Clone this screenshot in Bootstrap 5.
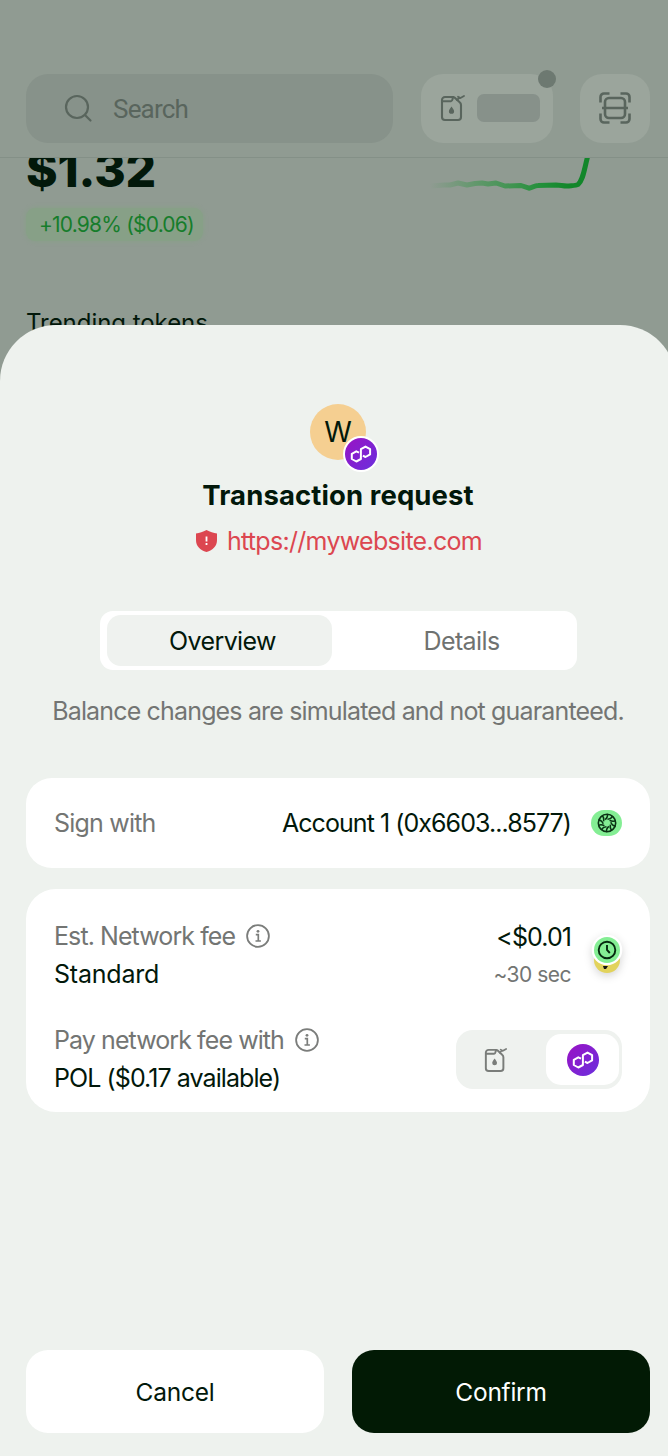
<!DOCTYPE html>
<html lang="en">
<head>
<meta charset="utf-8">
<meta name="viewport" content="width=device-width, initial-scale=1">
<title>Transaction request</title>
<link href="https://cdn.jsdelivr.net/npm/bootstrap@5.3.0/dist/css/bootstrap.min.css" rel="stylesheet">
<style>
  body{font-family:Inter,"Liberation Sans",sans-serif;background:#909b92;color:#02180a;height:1456px;overflow:hidden;font-size:25px;line-height:38px}
  span{white-space:nowrap}
  svg{display:block;flex:none}
  .topbar{height:158px;padding:73.500px 18px 0 26px;border-bottom:1px solid #849087}
  .search-box{width:367px;height:69px;border-radius:22px;background:#87928a;color:#59655d;padding-left:38px;font-family:Roboto,sans-serif;font-size:26px;letter-spacing:-.8px;gap:20px}
  .search-box span{padding-top:2px}
  .tile{height:69px;border-radius:22px;background:#9ba59c;color:#59655d}
  .tile-gas{width:132px;margin-left:28px;padding-left:19px;gap:11px}
  .tile-scan{width:70px;margin-left:27px}
  .skeleton{width:63px;height:28px;border-radius:7px;background:#87918a}
  .dot{width:18px;height:18px;background:#6d7971;right:-3px;top:-4px}
  .behind{height:200px;padding:0 26px;overflow:hidden}
  .price{font-size:48px;font-weight:800;letter-spacing:-.2px;line-height:50px;margin-top:-13px;height:51px}
  .change{height:33px;line-height:33px;margin-top:12px;padding:0 13px;border-radius:9px;background:#87a087;color:#167d2b;font-size:21px;letter-spacing:-.8px;width:177px;box-shadow:0 0 5px #87a087}
  .spark{margin-right:50px}
  .trend{margin-top:63px;font-size:24px;letter-spacing:-.05px}
  .sheet{left:0;right:-8px;top:325px;height:1131px;border-radius:56px 56px 0 0;background:#eef2ee;padding:79px 26px 0 26px}
  .avatar{width:56px;height:56px;background:#f5cf91;font-size:28px;line-height:56px}
  .chain{left:33px;top:32px}
  .title{font-size:27.500px;font-weight:700;line-height:38px;letter-spacing:.1px;margin-top:16px}
  .url{color:#dc4750;margin-top:8px;gap:10px;letter-spacing:-.7px;padding-left:2px}
  .tabs{width:477px;height:59px;border-radius:13px;background:#fff;padding:4px 7px;margin-top:51px;letter-spacing:-.6px}
  .tab-on{width:225px;background:#eff2ef;border-radius:14px;line-height:52px;padding-left:7px}
  .tab-off{color:#6f7270;line-height:52px;padding-left:22px}
  .muted{color:#737573}
  .note{margin-top:22px;letter-spacing:-.84px}
  .panel{background:#fff;border-radius:26px;padding:0 28px}
  .p1{height:90px;margin-top:48px}
  .p2{height:223px;margin-top:21px;padding-top:28px;border-radius:30px}
  .tight{letter-spacing:-.92px}
  .std{letter-spacing:-.2px}
  .acct{letter-spacing:-.94px;margin-right:20px}
  .acct-icon{width:31px;height:26px;border-radius:13px;background:#84ee94}
  .info{margin-left:11px}
  .right-text{padding-top:1px}
  .small-note{font-size:21px;letter-spacing:-.5px}
  .fee-icon{margin-left:16px;margin-right:-5px;margin-top:9px;filter:drop-shadow(0 3px 4px rgba(0,0,0,.16))}
  .pay{margin-top:27px}
  .switcher{width:166px;height:59px;border-radius:17px;background:#eff2ef;padding:4px 3px 4px 0;margin-top:9px;color:#7a7d7a}
  .switcher .on{width:73px;background:#fff;border-radius:15px}
  .switcher .off{padding-right:10px}
  .actions{left:26px;right:26px;bottom:23px;gap:28px}
  .act{height:83px;border-radius:22px;border:0;font-size:24.500px;letter-spacing:-.25px;background:#fff;color:#02180a}
  .act.ok{background:#021a05;color:#fff}
</style>
</head>
<body>
<svg width="0" height="0" class="position-absolute">
  <defs>
    <linearGradient id="pg" x1="0" y1="0" x2="1" y2="1"><stop offset="0" stop-color="#9a12c4"/><stop offset="1" stop-color="#6a30dd"/></linearGradient>
    <symbol id="gas" viewBox="0 0 26 28"><g fill="none" stroke="currentColor" stroke-width="2.100" stroke-linejoin="round" stroke-linecap="round"><path d="M13.500 3H5a3 3 0 0 0-3 3v17a3 3 0 0 0 3 3h13a3 3 0 0 0 3-3V11c0-1-.5-2-1.300-2.700L14.500 3.500"/><path d="M2.500 7.300h8.500c1.500 0 1.300-1.800 2-3.800"/><path d="M17 6l2.500-2.500M18 2.800l2 1.400 4-2.200" stroke-width="1.800"/></g><path d="M11.500 12.500c1.500 2.200 2.600 3.300 2.600 4.700a2.600 2.600 0 0 1-5.200 0c0-1.400 1.100-2.500 2.600-4.700z" fill="currentColor"/></symbol>
    <symbol id="pol" viewBox="0 0 32 32"><circle cx="16" cy="16" r="16" fill="url(#pg)"/><path d="M14 14.700L11.300 13.300l-4.500 2.500v5.200l4.500 2.500 4.600-2.500V11.200l4.600-2.600 4.600 2.600v5.200l-4.600 2.600-2.600-1.400" fill="none" stroke="#fff" stroke-width="2" stroke-linejoin="round"/></symbol>
    <symbol id="info" viewBox="0 0 24 24"><circle cx="12" cy="12" r="10.900" fill="none" stroke="#7b7d7b" stroke-width="1.800"/><circle cx="12" cy="7.300" r="1.400" fill="#7b7d7b"/><path d="M9.800 10.700h2.500v6M9.500 17h5.400" fill="none" stroke="#7b7d7b" stroke-width="1.700"/></symbol>
    <path id="blade" d="M.5-3.800C3-4 5.500-5.500 5.200-7.200"/>
  </defs>
</svg>
<header class="topbar d-flex">
  <div class="search-box d-flex align-items-center">
    <svg width="29" height="29" viewBox="0 0 29 29" fill="none" stroke="currentColor" stroke-width="2.200" stroke-linecap="round"><circle cx="13" cy="13" r="11"/><path d="M21 21l5.500 5.500"/></svg>
    <span>Search</span>
  </div>
  <div class="tile tile-gas d-flex align-items-center position-relative">
    <svg width="26" height="28"><use href="#gas"/></svg>
    <div class="skeleton"></div>
    <div class="dot rounded-circle position-absolute"></div>
  </div>
  <div class="tile tile-scan d-flex align-items-center justify-content-center">
    <svg width="32" height="32" viewBox="0 0 32 32" fill="none" stroke="currentColor" stroke-width="2.600"><path d="M1.500 10.500V5A3.500 3.500 0 0 1 5 1.500h5.500M21.500 1.500H27A3.500 3.500 0 0 1 30.500 5v5.500M30.500 21.500V27a3.500 3.500 0 0 1-3.500 3.500h-5.500M10.500 30.500H5A3.500 3.500 0 0 1 1.500 27v-5.500M3 16h26"/><rect x="6" y="6" width="20" height="20" rx="4"/></svg>
  </div>
</header>
<section class="behind">
  <div class="d-flex justify-content-between">
    <div class="price">$1.32</div>
    <svg class="spark" width="165" height="38" viewBox="427 158 165 38"><defs><linearGradient id="sg" gradientUnits="userSpaceOnUse" x1="430" x2="570" y1="0" y2="0"><stop offset="0" stop-color="#2d9440" stop-opacity="0"/><stop offset=".35" stop-color="#2d9440" stop-opacity=".5"/><stop offset=".8" stop-color="#22903a"/><stop offset="1" stop-color="#12862a"/></linearGradient></defs><path d="M430 186l14-1 6 0 8-2 9 2 8-1.500 7-.5 6 1 8-1 9 3 16-.5 8 2.700c4-.5 5-2.700 9-2.700l18-.5c5 0 6 1 11 1 5-.5 9-.2 11-1.500 5-4 6-14 9.500-27.500" fill="none" stroke="url(#sg)" stroke-width="5" stroke-linejoin="round"/></svg>
  </div>
  <div class="change"><span>+10.98% ($0.06)</span></div>
  <div class="trend">Trending tokens</div>
</section>
<main class="sheet position-absolute d-flex flex-column align-items-center">
  <div class="avatar rounded-circle position-relative text-center">W
    <svg class="chain position-absolute" width="36" height="36" viewBox="-2 -2 36 36"><circle cx="16" cy="16" r="18" fill="#fff"/><use href="#pol" width="32" height="32"/></svg>
  </div>
  <h1 class="title mb-0">Transaction request</h1>
  <div class="url d-flex align-items-center">
    <svg width="21" height="22" viewBox="0 0 21 22"><path d="M10.500 0c3.500 2 7 3 10.500 3.500v6.500c0 6-4 10-10.500 12C4 20 0 16 0 10V3.500C3.500 3 7 2 10.500 0z" fill="#dc4750"/><path d="M10.500 6.500v5M10.500 13v2" stroke="#fff" stroke-width="1.800"/></svg>
    <span>https://mywebsite.com</span>
  </div>
  <div class="tabs d-flex text-center">
    <div class="tab-on">Overview</div>
    <div class="tab-off flex-fill">Details</div>
  </div>
  <div class="note muted"><span>Balance changes are simulated and not guaranteed.</span></div>
  <section class="panel p1 w-100 d-flex align-items-center">
    <span class="muted me-auto" style="letter-spacing:-.8px">Sign with</span>
    <span class="acct">Account 1 (0x6603...8577)</span>
    <div class="acct-icon d-flex align-items-center justify-content-center">
      <svg width="20" height="20" viewBox="-10 -10 20 20" fill="none" stroke="#0a3314" stroke-width="1.600"><circle r="8.700"/><use href="#blade"/><use href="#blade" transform="rotate(36)"/><use href="#blade" transform="rotate(72)"/><use href="#blade" transform="rotate(108)"/><use href="#blade" transform="rotate(144)"/><use href="#blade" transform="rotate(180)"/><use href="#blade" transform="rotate(216)"/><use href="#blade" transform="rotate(252)"/><use href="#blade" transform="rotate(288)"/><use href="#blade" transform="rotate(324)"/></svg>
    </div>
  </section>
  <section class="panel p2 w-100">
    <div class="d-flex">
      <div class="me-auto">
        <div class="d-flex align-items-center"><span class="muted tight">Est. Network fee</span><svg class="info" width="24" height="24"><use href="#info"/></svg></div>
        <div class="std">Standard</div>
      </div>
      <div class="right-text text-end">
        <div class="tight">&lt;$0.01</div>
        <div class="small-note muted">~30 sec</div>
      </div>
      <svg class="fee-icon" width="40" height="54" viewBox="-20 -24 40 54"><circle cy="10" r="13" fill="#e2d35c"/><path d="M-4 16h5l-2 3h-2z" fill="#111"/><circle r="15.300" fill="#fff"/><circle r="13" fill="#84ee94"/><circle r="8.300" fill="none" stroke="#06290f" stroke-width="1.900"/><path d="M0-5v5l2.800 3" fill="none" stroke="#06290f" stroke-width="1.900"/></svg>
    </div>
    <div class="pay d-flex">
      <div class="me-auto">
        <div class="d-flex align-items-center"><span class="muted tight">Pay network fee with</span><svg class="info" width="24" height="24"><use href="#info"/></svg></div>
        <div class="tight">POL ($0.17 available)</div>
      </div>
      <div class="switcher d-flex">
        <div class="off flex-fill d-flex align-items-center justify-content-center"><svg width="24" height="26"><use href="#gas"/></svg></div>
        <div class="on d-flex align-items-center justify-content-center"><svg width="32" height="32"><use href="#pol"/></svg></div>
      </div>
    </div>
  </section>
  <div class="actions position-absolute d-flex">
    <button class="act w-50">Cancel</button>
    <button class="act ok w-50">Confirm</button>
  </div>
</main>
<script src="https://cdn.jsdelivr.net/npm/bootstrap@5.3.0/dist/js/bootstrap.bundle.min.js"></script>
</body>
</html>
